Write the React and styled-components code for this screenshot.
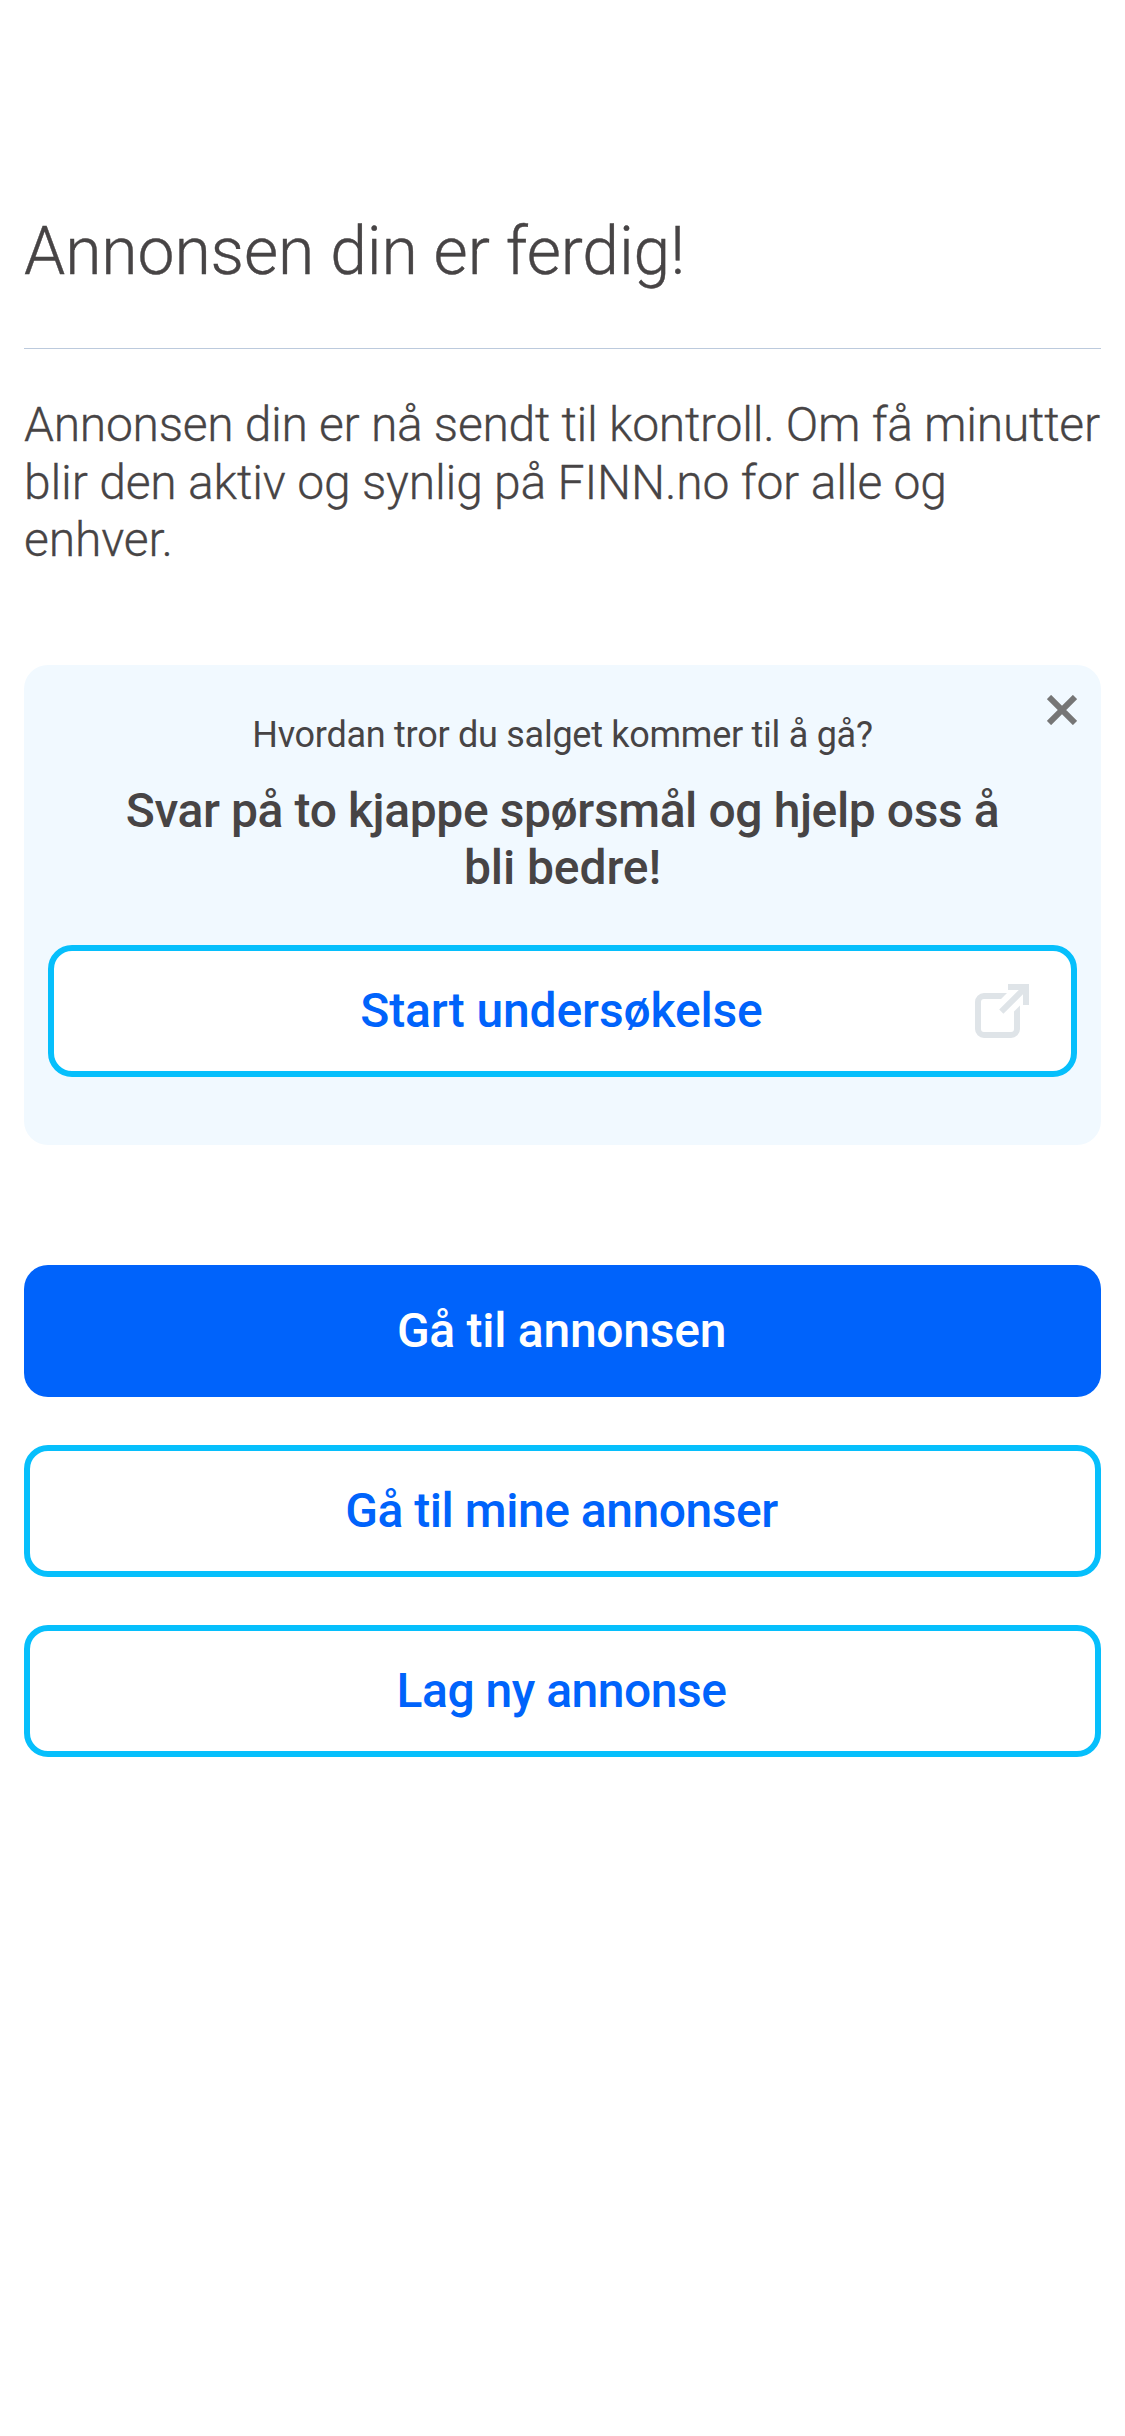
import React from "react";
import styled, { createGlobalStyle, css } from "styled-components";

const GlobalStyle = createGlobalStyle`
  *, *::before, *::after {
    box-sizing: border-box;
  }

  body {
    margin: 0;
    background: #fff;
    color: #474445;
    font-family: Roboto, "Liberation Sans", sans-serif;
  }
`;

const Page = styled.main`
  min-height: 2436px;
  padding: 210px 24px 0;
`;

const Title = styled.h1`
  margin: 0;
  padding-bottom: 54px;
  border-bottom: 1px solid #bccadd;
  font-size: 66px;
  font-weight: 300;
  line-height: 84px;
  letter-spacing: -0.1px;
  -webkit-text-stroke: 0.4px currentColor;
`;

const Lead = styled.p`
  margin: 47px 0 0;
  font-size: 48px;
  font-weight: 300;
  line-height: 57.6px;
  -webkit-text-stroke: 0.3px currentColor;
`;

const Line = styled.span`
  display: block;
  white-space: nowrap;
  letter-spacing: ${({ $tracking }) => $tracking}px;
`;

const SurveyCard = styled.section`
  position: relative;
  margin-top: 96px;
  height: 480px;
  padding: 48px 24px 0;
  border-radius: 24px;
  background: #f1f9ff;
  text-align: center;
`;

const CloseButton = styled.button`
  position: absolute;
  top: 30px;
  right: 24px;
  display: flex;
  padding: 0;
  border: 0;
  background: none;
  color: #767676;
`;

const Question = styled.p`
  margin: 0;
  font-size: 36px;
  line-height: 45px;
  letter-spacing: -0.27px;
`;

const Prompt = styled.h2`
  margin: 24px 0 48px;
  font-size: 48px;
  font-weight: 500;
  line-height: 57.6px;
`;

const outlined = css`
  border: 6px solid #06bffc;
  background: #fff;
  color: #0063fb;
`;

const filled = css`
  border: 0;
  background: #0063fb;
  color: #fff;
`;

const Button = styled.button`
  position: relative;
  display: flex;
  align-items: center;
  justify-content: center;
  width: 100%;
  height: 132px;
  padding: 0 2px 0 0;
  border-radius: 24px;
  font: 500 48px Roboto, "Liberation Sans", sans-serif;
  letter-spacing: ${({ $tracking }) => $tracking}px;
  ${({ $primary }) => ($primary ? filled : outlined)}
`;

const ButtonIcon = styled.span`
  position: absolute;
  right: 42px;
  top: 33px;
  display: flex;
  color: #dfe4e8;
`;

const Actions = styled.nav`
  display: flex;
  flex-direction: column;
  gap: 48px;
  margin-top: 120px;
`;

const CloseIcon = () => (
  <svg width="30" height="30" viewBox="0 0 30 30" fill="none" stroke="currentColor" strokeWidth="6">
    <path d="M2 2l26 26M28 2L2 28" />
  </svg>
);

const ExternalIcon = () => (
  <svg width="54" height="54" viewBox="0 0 54 54" fill="currentColor">
    <path d="M33 0H54V21H48V10.2L28.4 29.8L24.2 25.6L43.8 6H33Z" />
    <path d="M32 9H9A9 9 0 0 0 0 18V45A9 9 0 0 0 9 54H36A9 9 0 0 0 45 45V21.5L39 27.5V45A3 3 0 0 1 36 48H9A3 3 0 0 1 6 45V18A3 3 0 0 1 9 15H26Z" />
  </svg>
);

export default function App() {
  return (
    <Page>
      <GlobalStyle />
      <Title>Annonsen din er ferdig!</Title>
      <Lead>
        <Line $tracking={-0.29}>Annonsen din er nå sendt til kontroll. Om få minutter</Line>
        <Line $tracking={-0.18}>blir den aktiv og synlig på FINN.no for alle og</Line>
        <Line $tracking={-0.15}>enhver.</Line>
      </Lead>
      <SurveyCard>
        <CloseButton aria-label="Lukk">
          <CloseIcon />
        </CloseButton>
        <Question>Hvordan tror du salget kommer til å gå?</Question>
        <Prompt>
          <Line $tracking={-0.4}>Svar på to kjappe spørsmål og hjelp oss å</Line>
          <Line $tracking={-0.1}>bli bedre!</Line>
        </Prompt>
        <Button $tracking={-0.14}>
          Start undersøkelse
          <ButtonIcon>
            <ExternalIcon />
          </ButtonIcon>
        </Button>
      </SurveyCard>
      <Actions>
        <Button $primary $tracking={-0.27}>Gå til annonsen</Button>
        <Button $tracking={-0.47}>Gå til mine annonser</Button>
        <Button $tracking={-0.5}>Lag ny annonse</Button>
      </Actions>
    </Page>
  );
}
